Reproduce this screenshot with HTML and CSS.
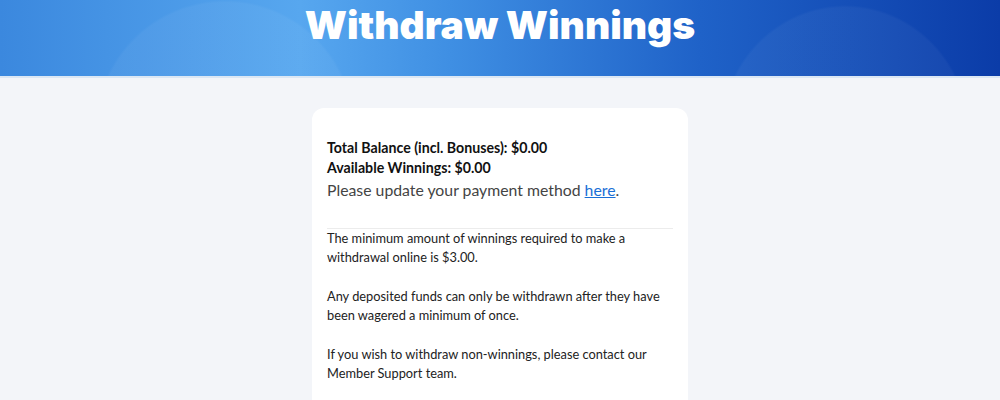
FILE: index.html
```html
<!DOCTYPE html>
<html>
<head>
    <title>Withdraw Winnings</title>
    <link rel="stylesheet" href="styles.css">
</head>
<body>

<div class="hero">
    <h1>Withdraw Winnings</h1>
</div>

<div class="panel">
    <div class="balances">
        <p class="balance-line">Total Balance (incl. Bonuses): $0.00</p>
        <p class="balance-line">Available Winnings: $0.00</p>
        <p class="payment-note">Please update your payment method <a href="#">here</a>.</p>
    </div>
    <div class="rules">
        <p>The minimum amount of winnings required to make a withdrawal online is $3.00.</p>
        <p>Any deposited funds can only be withdrawn after they have been wagered a minimum of once.</p>
        <p>If you wish to withdraw non-winnings, please contact our Member Support team.</p>
    </div>
</div>

</body>
</html>
```

FILE: styles.css
```css
body {
    margin: 0;
    font-family: Lato, "Open Sans", sans-serif;
    background-color: #f3f5f9;
    color: #1c1c1c;
}

.hero {
    height: 76px;
    border-bottom: 2px solid #dbe7f4;
    background:
        radial-gradient(ellipse 130px 130px at 225px 130px, rgba(255,255,255,0.045) 98%, transparent 100%),
        radial-gradient(ellipse 125px 130px at 845px 135px, rgba(255,255,255,0.04) 98%, transparent 100%),
        linear-gradient(90deg, #3b88de 0%, #57a7ef 30%, #3f8fe3 45%, #1f62c8 70%, #0b3ca8 100%);
    overflow: hidden;
    text-align: center;
}

.hero h1 {
    margin: 0;
    padding-top: 2px;
    font-family: Inter, sans-serif;
    font-weight: 900;
    font-size: 39px;
    line-height: 46px;
    letter-spacing: 0;
    color: #ffffff;
}

.panel {
    width: 346px;
    margin: 30px auto 0;
    padding: 30px 15px 20px;
    background-color: #ffffff;
    border-radius: 12px;
}

.balances {
    padding-bottom: 26px;
    border-bottom: 1px solid #ececec;
}

.balance-line {
    margin: 0;
    font-size: 14.2px;
    font-weight: 700;
    line-height: 20px;
    color: #111;
}

.payment-note {
    margin: 0;
    font-size: 15.8px;
    line-height: 24px;
    color: #444;
}

.payment-note a {
    color: #1a6fd6;
}

.rules p {
    margin: 0 0 20px;
    font-size: 12.8px;
    line-height: 19px;
    color: #222;
}
```
